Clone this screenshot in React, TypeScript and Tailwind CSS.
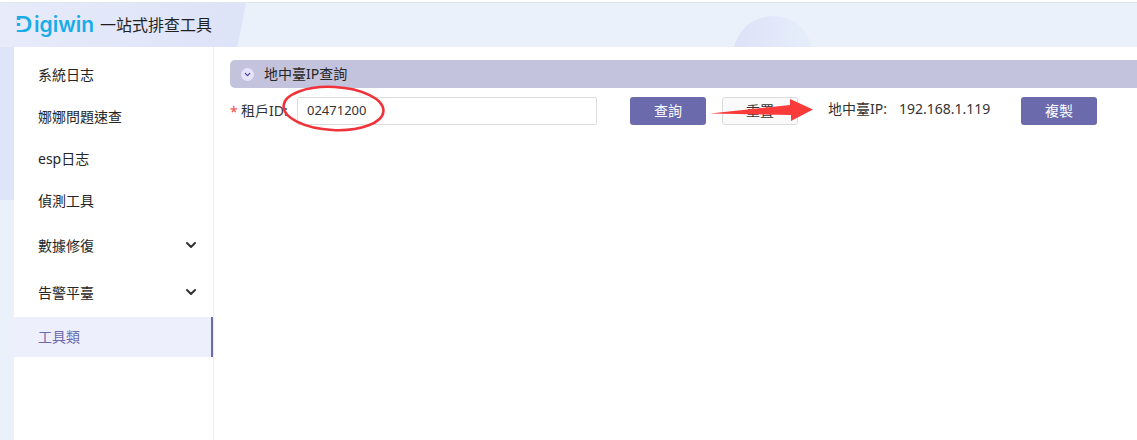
import { ChevronDown } from "lucide-react";

const cjk = "font-['Noto_Sans','Noto_Sans_CJK_TC',sans-serif]";

const menu = [
  { label: "系統日志", height: "h-[42px]" },
  { label: "娜娜問題速查", height: "h-[42px]" },
  { label: "esp日志", height: "h-[42px]" },
  { label: "偵測工具", height: "h-[42px]" },
  { label: "數據修復", height: "h-[47px]", caret: true },
  { label: "告警平臺", height: "h-[47px]", caret: true },
];

function Annotations() {
  return (
    <svg className="absolute left-0 top-0 pointer-events-none" width="1137" height="440">
      <ellipse
        cx="333.5"
        cy="108.5"
        rx="50"
        ry="21.5"
        fill="none"
        stroke="#f0333a"
        strokeWidth="2.5"
        transform="rotate(3 333.5 108.5)"
      />
      <path d="M710 113.5 L790 105 L790 99 L813 109.5 L791 121 L791 115 Z" fill="#fb3a3a" />
    </svg>
  );
}

function Logo() {
  return (
    <span className="relative mb-[1px] w-[75px] flex-none whitespace-nowrap font-['Inter',sans-serif] text-[21px] font-semibold leading-none text-[#19ace8]">
      <span className="inline-block w-[19px] origin-left scale-x-[1.15]">D</span>
      igiwin
      {/* gap in the stem of the D */}
      <span className="absolute left-[2px] top-[6px] h-[3px] w-[5px] bg-[#e7ebfa]" />
      <span className="absolute left-0 top-[12px] h-[4px] w-[7px] bg-[#e7ebfa]" />
    </span>
  );
}

export default function App() {
  return (
    <div className={`relative h-[440px] w-[1137px] overflow-hidden bg-white ${cjk}`}>
      <div className="h-[2px] bg-white" />
      <div className="h-px bg-[#e2e6e6]" />

      <header className="relative flex h-[44px] items-center overflow-hidden bg-[#eaf1fb]">
        <div className="absolute left-0 top-0 h-full w-[246px] bg-gradient-to-r from-[#e7ebfa] to-[#dde3f8] [clip-path:polygon(0_0,100%_0,96.5%_100%,0_100%)]" />
        <div className="absolute left-[733px] top-[13px] h-[80px] w-[80px] rounded-full bg-gradient-to-r from-[#dde2f8] to-[#e6eefa]" />
        <div className="relative flex items-center pl-[15px]">
          <Logo />
          <span className="ml-[10px] text-[16px] leading-none text-[#1f1f1f]">一站式排查工具</span>
        </div>
      </header>

      <div className="flex h-[393px]">
        <div className="w-[14px] bg-[#eaf1fb]">
          <div className="h-[153px] bg-[#dfe5f9]" />
        </div>

        <aside className="w-[200px] border-r border-[#eeeeef] bg-white">
          <nav className="pt-[8px]">
            {menu.map((item) => (
              <div
                key={item.label}
                className={`flex items-center justify-between pl-[24px] pr-[14px] text-[14px] text-[#262626] ${item.height}`}
              >
                <span className="mb-[2px] leading-none">{item.label}</span>
                {item.caret && <ChevronDown size={16} strokeWidth={3} className="mb-[4px] text-[#333]" />}
              </div>
            ))}
            <div className="flex h-[40px] items-center border-r-2 border-[#6a6aad] bg-[#eeeffc] pb-[1px] pl-[24px] text-[14px] leading-none text-[#6a6aad]">
              工具類
            </div>
          </nav>
        </aside>

        <main className="flex-1 pl-[16px] pt-[13px]">
          <div className="flex h-[28px] items-center rounded-l-[5px] bg-[#c3c3de] pl-[11px] text-[14px] text-[#262626]">
            <span className="flex h-[13px] w-[13px] items-center justify-center rounded-full bg-[#e4e3fb]">
              <ChevronDown size={9} strokeWidth={3} className="text-[#3d3d9c]" />
            </span>
            <span className="mb-[2px] ml-[10px]">地中臺IP查詢</span>
          </div>

          <div className="mt-[9px] flex h-[28px] items-center text-[14px] text-[#333]">
            <span className="w-[11px] text-[#f0484e]">*</span>
            <span className="mb-[2px] w-[56px]">租戶ID:</span>
            <div className="flex h-[28px] w-[300px] items-center rounded-[2px] border border-[#dcdcdc] pl-[9px] text-[13px] text-[#333]">
              02471200
            </div>
            <button className="ml-[33px] h-[28px] w-[76px] rounded-[3px] bg-[#6a6aad] pb-[2px] text-[14px] text-white">查詢</button>
            <button className="ml-[16px] h-[28px] w-[76px] rounded-[3px] border border-[#dcdcdc] bg-[#fafafa] pb-[2px] text-[14px] text-[#333]">
              重置
            </button>
            <span className="mb-[6px] ml-[30px] w-[71px]">地中臺IP:</span>
            <span className="mb-[6px] w-[122px]">192.168.1.119</span>
            <button className="h-[28px] w-[76px] rounded-[3px] bg-[#6a6aad] pb-[2px] text-[14px] text-white">複製</button>
          </div>
        </main>
      </div>

      <Annotations />
    </div>
  );
}
